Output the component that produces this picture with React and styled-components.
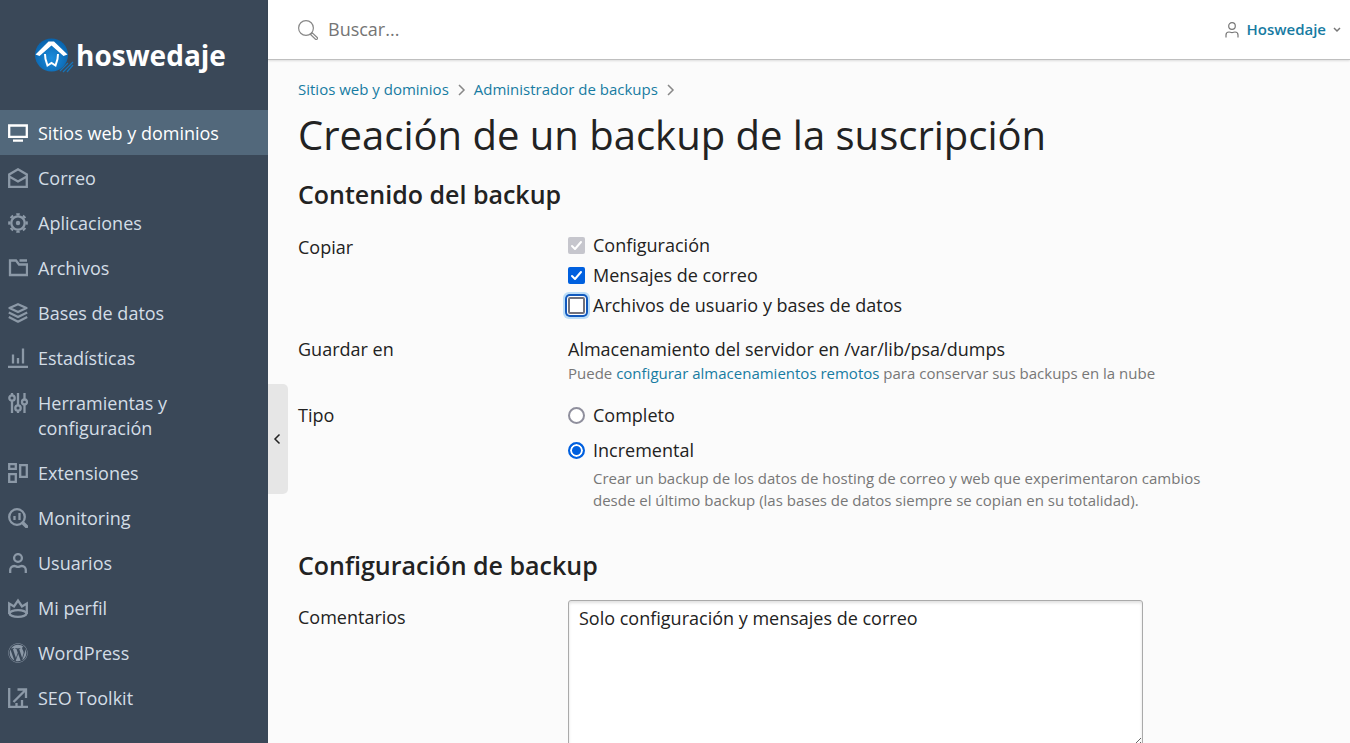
import { useState } from "react";
import styled, { createGlobalStyle } from "styled-components";
import { FaWordpress } from "react-icons/fa";

const GlobalStyle = createGlobalStyle`
    * {
        box-sizing: border-box;
    }
    body {
        margin: 0;
        background: #fbfbfb;
        color: #222;
        font-family: "Open Sans", "Noto Sans", sans-serif;
        font-size: 18px;
        line-height: 25px;
    }
    a {
        color: #177ba2;
        text-decoration: none;
    }
`
const StyledApp = styled.div`
    display: flex;
    height: 100vh;
    overflow: hidden;
`
const StyledSidebar = styled.aside`
    flex: 0 0 268px;
    background: #3a4858;
`
const StyledLogo = styled.a`
    display: flex;
    align-items: center;
    height: 110px;
    padding-left: 34px;
    color: #fff;
    font-size: 28px;
    font-weight: 700;

    svg {
        flex: none;
        width: 42px;
        height: 36px;
    }
`
const StyledMenuLink = styled.a`
    display: flex;
    gap: 10px;
    padding: 11px 48px 9px 8px;
    color: ${(props) => (props.$active ? "#fff" : "#d3dde6")};
    background: ${(props) => (props.$active ? "#52687b" : "transparent")};

    svg {
        flex: none;
        width: 20px;
        height: 20px;
        margin-top: 2px;
        color: ${(props) => (props.$active ? "#fff" : "#8c99a7")};
    }
`
const StyledPage = styled.div`
    position: relative;
    display: flex;
    flex-direction: column;
    flex: 1;
    min-width: 0;
`
const StyledToggle = styled.button`
    position: absolute;
    top: 384px;
    left: 0;
    display: flex;
    align-items: center;
    justify-content: center;
    width: 20px;
    height: 110px;
    padding: 0 2px 0 0;
    border: 0;
    border-radius: 0 5px 5px 0;
    background: #e6e6e6;
    color: #222;
    cursor: pointer;
`
const StyledHeader = styled.header`
    display: flex;
    flex: none;
    align-items: center;
    justify-content: space-between;
    height: 60px;
    padding: 0 8px 0 30px;
    border-bottom: 1px solid #bfbfbf;
    box-shadow: 0 1px 2px rgba(0, 0, 0, 0.12);
    background: #fff;
`
const StyledSearch = styled.label`
    display: flex;
    align-items: center;
    gap: 10px;
    color: #888;

    input {
        width: 300px;
        padding: 0;
        border: 0;
        outline: 0;
        background: none;
        font: inherit;
    }
    input::placeholder {
        color: #757575;
    }
`
const StyledUser = styled.button`
    display: flex;
    align-items: center;
    padding: 0;
    border: 0;
    background: none;
    color: #777;
    font: inherit;
    font-size: 15px;
    font-weight: 600;
    cursor: pointer;

    span {
        margin: 0 6px 0 8px;
        color: #177ba2;
    }
`
const StyledMain = styled.main`
    flex: 1;
    overflow-y: auto;
    scrollbar-width: none;
    padding: 17px 30px 30px;
`
const StyledBreadcrumbs = styled.nav`
    display: flex;
    align-items: center;
    gap: 8px;
    color: #888;
    font-size: 15px;
`
const StyledTitle = styled.h1`
    margin: 9px 0 20px;
    font-size: 40px;
    font-weight: 400;
    line-height: 48px;
`
const StyledSection = styled.section`
    margin-bottom: 39px;
`
const StyledSectionTitle = styled.h2`
    margin: 0 0 20px;
    font-size: 25px;
    font-weight: 600;
    line-height: 30px;
`
const StyledRow = styled.div`
    display: grid;
    grid-template-columns: 270px minmax(0, 1fr);
    margin-top: 19px;
`
const StyledLabel = styled.div`
    padding-top: ${(props) => props.$top || 0}px;
`
const StyledOptions = styled.div`
    display: flex;
    flex-direction: column;
    gap: ${(props) => props.$gap}px;
    padding-top: ${(props) => props.$top || 0}px;
`
const StyledOption = styled.label`
    display: flex;
    align-items: center;
    align-self: flex-start;
    gap: 8px;
`
const StyledHint = styled.div`
    max-width: 640px;
    color: #777;
    font-size: 15px;
    line-height: 22px;
`
const StyledOptionHint = styled(StyledHint)`
    margin-top: 4px;
    padding-left: 25px;
`
const StyledCheckbox = styled.input`
    appearance: none;
    flex: none;
    width: 17px;
    height: 17px;
    margin: 0;
    border: 2px solid #72727c;
    border-radius: 2px;
    background: #fff;

    &:checked {
        border: 0;
        background: #0060df url("data:image/svg+xml,%3Csvg xmlns='http://www.w3.org/2000/svg' viewBox='0 0 17 17'%3E%3Cpath d='M4 9l3 3 6-7' fill='none' stroke='white' stroke-width='2' stroke-linecap='round' stroke-linejoin='round'/%3E%3C/svg%3E");
    }
    &:checked:disabled {
        background-color: #c6c6cd;
    }
    &:focus {
        outline: 0;
        box-shadow: 0 0 0 1px #fff, 0 0 0 3px #1259bd, 0 0 0 5px #bbddf8;
    }
`
const StyledRadio = styled.input`
    appearance: none;
    flex: none;
    width: 17px;
    height: 17px;
    margin: 0;
    border: 2px solid #8f8f9d;
    border-radius: 50%;
    background: #fff;

    &:checked {
        border-color: #0060df;
        background: #0060df;
        box-shadow: inset 0 0 0 2px #fff;
    }
`
const StyledTextarea = styled.textarea`
    display: block;
    width: 100%;
    max-width: 575px;
    height: 147px;
    padding: 5px 10px;
    border: 1px solid #aaa;
    border-radius: 3px;
    outline: 0;
    box-shadow: inset 0 2px 3px rgba(0, 0, 0, 0.12);
    background: #fff;
    color: #222;
    font: inherit;
`

const stroke = { fill: "none", stroke: "currentColor", strokeWidth: 2 };
const menuStroke = { ...stroke, strokeWidth: 2.3 };

const icons = {
    sites: (
        <svg viewBox="0 0 20 20" {...menuStroke}>
            <path d="M1.200 2.500h17.600v11.300H1.200zM5 17.600h10" />
        </svg>
    ),
    mail: (
        <svg viewBox="0 0 20 20" {...menuStroke}>
            <path d="M1.200 18.800V6.500L10 1.300l8.800 5.200v12.300zM1.200 8.500l8.800 5 8.800-5" />
        </svg>
    ),
    apps: (
        <svg viewBox="0 0 20 20" {...menuStroke}>
            <circle cx="10" cy="10" r="6.700" />
            {/* teeth */}
            <circle cx="10" cy="10" r="8.700" pathLength="16" strokeDasharray="1 1" strokeDashoffset="0.5" />
            <circle cx="10" cy="10" r="2.200" fill="currentColor" stroke="none" />
        </svg>
    ),
    files: (
        <svg viewBox="0 0 20 20" {...menuStroke}>
            <path d="M2 2.500h6l3 4h8V17H2zM11.500 2.500H19" />
        </svg>
    ),
    databases: (
        <svg viewBox="0 0 20 20" {...menuStroke} strokeLinejoin="round">
            <path d="M10 1.200 18.500 5 10 9 1.500 5zM.8 9.500 10 14l9.200-4.500M.8 14 10 18.700 19.200 14" />
        </svg>
    ),
    stats: (
        <svg viewBox="0 0 20 20" {...menuStroke}>
            <path d="M0 18.800h20M5 6.500v9M10 10v5.500M15 .5v15" />
        </svg>
    ),
    tools: (
        <svg viewBox="0 0 20 20" {...menuStroke}>
            <path d="M4 0v2M4 8v12M10 0v12M10 18v2M16.500 0v6M16.500 12v8" />
            <circle cx="4" cy="5" r="2.700" />
            <circle cx="10" cy="15" r="2.700" />
            <circle cx="16.500" cy="9" r="2.500" />
        </svg>
    ),
    extensions: (
        <svg viewBox="0 0 20 20" {...menuStroke}>
            <path d="M1.200 1.200h6.600v4.600H1.200zM12.200 2.200h6.600v11.600h-6.600zM1.200 11.200h6.600v7.600H1.200z" />
        </svg>
    ),
    monitoring: (
        <svg viewBox="0 0 20 20" {...menuStroke}>
            <circle cx="9" cy="9" r="7.800" />
            <path d="M6.500 8v4M11.500 5v7" />
            <path d="m15 15 3.500 3.500" strokeWidth="3.500" strokeLinecap="round" />
        </svg>
    ),
    users: (
        <svg viewBox="0 0 20 20" {...menuStroke}>
            <circle cx="10" cy="5" r="3.900" />
            <path d="M2.200 20v-3c0-2 1.500-4 4-4 1.500 0 2 .8 3.800.8s2.300-.8 3.800-.8c2.500 0 4 2 4 4v3" />
        </svg>
    ),
    profile: (
        <svg viewBox="0 0 20 20" {...menuStroke}>
            <path d="M1.200 16V5.500L6 8.500l4-6 4 6 4.800-3V16" />
            <ellipse cx="10" cy="15.500" rx="8.500" ry="3.300" />
        </svg>
    ),
    wordpress: <FaWordpress />,
    seo: (
        <svg viewBox="0 0 20 20" {...menuStroke}>
            <path d="M1.200 0v18.800H20M5.500 14 17 2.500M9.500 1.500H18V10M8.500 15v4M14 12v7" />
        </svg>
    ),
};

const menu = [
    { icon: "sites", text: "Sitios web y dominios" },
    { icon: "mail", text: "Correo" },
    { icon: "apps", text: "Aplicaciones" },
    { icon: "files", text: "Archivos" },
    { icon: "databases", text: "Bases de datos" },
    { icon: "stats", text: "Estadísticas" },
    { icon: "tools", text: "Herramientas y configuración" },
    { icon: "extensions", text: "Extensiones" },
    { icon: "monitoring", text: "Monitoring" },
    { icon: "users", text: "Usuarios" },
    { icon: "profile", text: "Mi perfil" },
    { icon: "wordpress", text: "WordPress" },
    { icon: "seo", text: "SEO Toolkit" },
];

const LogoMark = () => (
    <svg viewBox="0 0 42 36" fill="none">
        <defs>
            <radialGradient id="globe" cx="0.5" cy="0.6" r="0.6">
                <stop offset="0" stopColor="#1c8ddd" />
                <stop offset="1" stopColor="#0862ab" />
            </radialGradient>
        </defs>
        <circle cx="17.500" cy="18" r="16.500" fill="url(#globe)" />
        <path d="M1.500 17.500 14.500 4.500h5.500l13.500 13-4 1.500L17.500 8.500 5.500 19z" fill="#fff" />
        <path d="m11 17 .5 5 2 6.500 4-2.500 4 2.500 2-6.500.5-5" stroke="#fff" strokeWidth="2" />
        <path d="m29 35 10-10M33 35l6-7M26 34l8-8" stroke="#1673b8" strokeWidth="1.300" />
    </svg>
);

const Chevron = ({ d, width, height }) => (
    <svg width={width} height={height} viewBox={`0 0 ${width} ${height}`} {...stroke} strokeWidth="1.500">
        <path d={d} />
    </svg>
);

const App = () => {
    const [mail, setMail] = useState(true);
    const [userFiles, setUserFiles] = useState(false);
    const [type, setType] = useState("incremental");
    const [comments, setComments] = useState("Solo configuración y mensajes de correo");

    return (
        <>
            <GlobalStyle />
            <StyledApp>
                <StyledSidebar>
                    <StyledLogo href="#">
                        <LogoMark />
                        hoswedaje
                    </StyledLogo>
                    <nav>
                        {menu.map((e, i) => (
                            <StyledMenuLink key={e.icon} href="#" $active={i === 0}>
                                {icons[e.icon]}
                                <span>{e.text}</span>
                            </StyledMenuLink>
                        ))}
                    </nav>
                </StyledSidebar>
                <StyledPage>
                    <StyledHeader>
                        <StyledSearch>
                            <svg width="20" height="20" viewBox="0 0 20 20" {...stroke} strokeWidth="1.200">
                                <circle cx="8" cy="8" r="7.400" />
                                <path d="m12.500 14.500 1.700-1.700 5 4.700c1 1-.7 2.700-1.700 1.700z" />
                            </svg>
                            <input type="search" placeholder="Buscar..." aria-label="Buscar" />
                        </StyledSearch>
                        <StyledUser type="button">
                            <svg width="14" height="16" viewBox="0 0 14 16" {...stroke} strokeWidth="1.200">
                                <circle cx="7" cy="4" r="3.300" />
                                <path d="M1 15.500V13c0-1.800 1.200-3 3-3 1.200 0 1.500.6 3 .6s1.800-.6 3-.6c1.800 0 3 1.200 3 3v2.500" />
                            </svg>
                            <span>Hoswedaje</span>
                            <Chevron width={10} height={6} d="m2 1 3 3 3-3" />
                        </StyledUser>
                    </StyledHeader>
                    <StyledMain>
                        <StyledBreadcrumbs>
                            <a href="#">Sitios web y dominios</a>
                            <Chevron width={9} height={12} d="m2 1 5 5-5 5" />
                            <a href="#">Administrador de backups</a>
                            <Chevron width={9} height={12} d="m2 1 5 5-5 5" />
                        </StyledBreadcrumbs>
                        <StyledTitle>Creación de un backup de la suscripción</StyledTitle>
                        <StyledSection>
                            <StyledSectionTitle>Contenido del backup</StyledSectionTitle>
                            <StyledRow role="group" aria-labelledby="copy">
                                <StyledLabel id="copy" $top={6}>Copiar</StyledLabel>
                                <StyledOptions $gap={5} $top={4}>
                                    <StyledOption>
                                        <StyledCheckbox type="checkbox" checked disabled readOnly />
                                        Configuración
                                    </StyledOption>
                                    <StyledOption>
                                        <StyledCheckbox type="checkbox" checked={mail} onChange={() => setMail(!mail)} />
                                        Mensajes de correo
                                    </StyledOption>
                                    <StyledOption>
                                        <StyledCheckbox
                                            type="checkbox"
                                            autoFocus
                                            checked={userFiles}
                                            onChange={() => setUserFiles(!userFiles)}
                                        />
                                        Archivos de usuario y bases de datos
                                    </StyledOption>
                                </StyledOptions>
                            </StyledRow>
                            <StyledRow>
                                <StyledLabel>Guardar en</StyledLabel>
                                <div>
                                    Almacenamiento del servidor en /var/lib/psa/dumps
                                    <StyledHint>
                                        Puede <a href="#">configurar almacenamientos remotos</a> para conservar sus backups en la nube
                                    </StyledHint>
                                </div>
                            </StyledRow>
                            <StyledRow role="radiogroup" aria-labelledby="type">
                                <StyledLabel id="type">Tipo</StyledLabel>
                                <div>
                                    <StyledOptions $gap={10}>
                                        <StyledOption>
                                            <StyledRadio
                                                type="radio"
                                                name="type"
                                                checked={type === "full"}
                                                onChange={() => setType("full")}
                                            />
                                            Completo
                                        </StyledOption>
                                        <StyledOption>
                                            <StyledRadio
                                                type="radio"
                                                name="type"
                                                checked={type === "incremental"}
                                                onChange={() => setType("incremental")}
                                            />
                                            Incremental
                                        </StyledOption>
                                    </StyledOptions>
                                    <StyledOptionHint>
                                        Crear un backup de los datos de hosting de correo y web que experimentaron cambios
                                        desde el último backup (las bases de datos siempre se copian en su totalidad).
                                    </StyledOptionHint>
                                </div>
                            </StyledRow>
                        </StyledSection>
                        <StyledSection>
                            <StyledSectionTitle>Configuración de backup</StyledSectionTitle>
                            <StyledRow>
                                <StyledLabel as="label" htmlFor="comments" $top={5}>Comentarios</StyledLabel>
                                <StyledTextarea
                                    id="comments"
                                    value={comments}
                                    onChange={(e) => setComments(e.target.value)}
                                />
                            </StyledRow>
                        </StyledSection>
                    </StyledMain>
                    <StyledToggle type="button" aria-label="Contraer menú">
                        <Chevron width={8} height={12} d="M6.500 1.500 2 6l4.500 4.500" />
                    </StyledToggle>
                </StyledPage>
            </StyledApp>
        </>
    );
};

export default App;
